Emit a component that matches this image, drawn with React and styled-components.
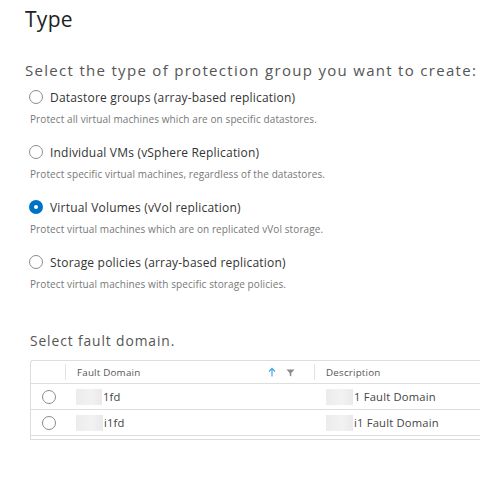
import React from "react";
import styled, { createGlobalStyle } from "styled-components";

const GlobalStyle = createGlobalStyle`
  html, body {
    margin: 0;
    padding: 0;
    background: #fff;
  }
  body {
    font-family: "Open Sans", "Liberation Sans", sans-serif;
    color: #333;
    overflow: hidden;
  }
`;

const Page = styled.div`
  width: 480px;
  height: 499px;
  padding: 6px 0 0 25px;
  box-sizing: border-box;
  overflow: hidden;
`;

const Title = styled.h2`
  margin: 0;
  font-size: 21px;
  font-weight: 400;
  line-height: 26px;
  color: #222;
  letter-spacing: 0.3px;
`;

const Lead = styled.p`
  margin: 28px 0 0 0;
  font-size: 15px;
  line-height: 20px;
  color: #555;
  letter-spacing: 1.3px;
  white-space: nowrap;
`;

const Options = styled.div`
  display: flex;
  flex-direction: column;
  padding-left: 4px;
  margin-top: 6px;
`;

const Option = styled.label`
  display: flex;
  flex-direction: column;
  height: 55px;
`;

const OptionHead = styled.div`
  display: flex;
  align-items: center;
  gap: 7px;
  height: 22px;
`;

const Radio = styled.span`
  width: 14px;
  height: 14px;
  border-radius: 50%;
  box-sizing: border-box;
  flex-shrink: 0;
  border: ${(p) => (p.checked ? "5px solid #0072c6" : "1px solid #8c8c8c")};
  background: #fff;
`;

const OptionLabel = styled.span`
  font-size: 12px;
  color: #333;
  letter-spacing: 0.2px;
`;

const Hint = styled.span`
  font-size: 10px;
  color: #777;
  line-height: 22px;
  letter-spacing: 0.1px;
  padding-left: 1px;
`;

const SubTitle = styled.p`
  margin: 25px 0 0 5px;
  font-size: 13.8px;
  line-height: 20px;
  color: #555;
  letter-spacing: 0.9px;
`;

const Grid = styled.div`
  margin: 9px 0 0 5px;
  width: 470px;
  border: 1px solid #ddd;
  border-right: none;
  border-radius: 3px 0 0 0;
  padding-bottom: 3px;
`;

const Row = styled.div`
  display: grid;
  grid-template-columns: 35px 249px 1fr;
  align-items: center;
  height: ${(p) => (p.header ? "22px" : "25px")};
  border-bottom: 1px solid #ddd;
`;

const Cell = styled.div`
  display: flex;
  align-items: center;
  height: 100%;
  box-sizing: border-box;
  padding-left: ${(p) => p.pad || 0}px;
  font-size: 11.2px;
  color: #444;
  letter-spacing: 0.2px;
`;

const Sep = styled.span`
  width: 1px;
  height: 16px;
  background: #e2e2e2;
  align-self: center;
`;

const HeadCell = styled.div`
  display: flex;
  align-items: center;
  height: 100%;
  font-size: 9.8px;
  color: #565656;
  letter-spacing: 0.2px;
`;

const HeadText = styled.span`
  flex: 1;
  padding-left: 11px;
`;

const Icons = styled.span`
  display: flex;
  align-items: center;
  gap: 10px;
  margin-right: 19px;
`;

const Blur = styled.span`
  display: inline-block;
  width: ${(p) => p.w}px;
  height: 16px;
  background: linear-gradient(90deg, #ececec, #f2f2f2 60%, #e9e9e9);
  margin-right: 1px;
`;

const RowRadio = styled(Radio)`
  margin-left: 11px;
`;

const options = [
  ["Datastore groups (array-based replication)", "Protect all virtual machines which are on specific datastores."],
  ["Individual VMs (vSphere Replication)", "Protect specific virtual machines, regardless of the datastores."],
  ["Virtual Volumes (vVol replication)", "Protect virtual machines which are on replicated vVol storage.", true],
  ["Storage policies (array-based replication)", "Protect virtual machines with specific storage policies."],
];

const rows = [
  ["1fd", "1 Fault Domain", 26],
  ["i1fd", "i1 Fault Domain", 27],
];

export default function App() {
  return (
    <>
      <GlobalStyle />
      <Page>
        <Title>Type</Title>
        <Lead>Select the type of protection group you want to create:</Lead>
        <Options>
          {options.map(([label, hint, checked]) => (
            <Option key={label}>
              <OptionHead>
                <Radio checked={checked} />
                <OptionLabel>{label}</OptionLabel>
              </OptionHead>
              <Hint>{hint}</Hint>
            </Option>
          ))}
        </Options>
        <SubTitle>Select fault domain.</SubTitle>
        <Grid>
          <Row header>
            <HeadCell>
              <span style={{ flex: 1 }} />
              <Sep />
            </HeadCell>
            <HeadCell>
              <HeadText>Fault Domain</HeadText>
              <Icons>
                <svg width="8" height="10" viewBox="0 0 8 10">
                  <path d="M4 9.5V1.5M1 4.5L4 1.3L7 4.5" fill="none" stroke="#4aa3df" strokeWidth="1.2" />
                </svg>
                <svg width="9" height="9" viewBox="0 0 9 9">
                  <path d="M0.5 1.5H8.5L5.3 5V8.5L3.7 7.6V5Z" fill="#8a8a8a" />
                </svg>
              </Icons>
              <Sep />
            </HeadCell>
            <HeadCell>
              <HeadText>Description</HeadText>
            </HeadCell>
          </Row>
          {rows.map(([name, desc, w]) => (
            <Row key={name}>
              <Cell>
                <RowRadio />
              </Cell>
              <Cell pad={10}>
                <Blur w={w} />
                {name}
              </Cell>
              <Cell pad={11}>
                <Blur w={27} />
                {desc}
              </Cell>
            </Row>
          ))}
        </Grid>
      </Page>
    </>
  );
}
